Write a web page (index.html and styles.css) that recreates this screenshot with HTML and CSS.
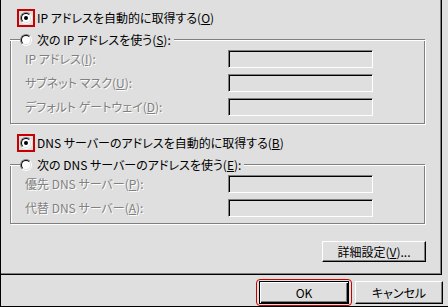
FILE: index.html
```html
<!DOCTYPE html>
<html lang="ja">
<head>
    <meta charset="UTF-8" />
    <title>インターネット プロトコル (TCP/IP) のプロパティ</title>
    <link rel="stylesheet" href="styles.css">
</head>
<body>

<div class="dialog">
    <div class="page">

        <!-- IP address -->
        <div class="option">
            <span class="mark"><span class="radio checked"></span></span>
            <span>IP アドレスを自動的に取得する(<u>O</u>)</span>
        </div>

        <div class="group">
            <div class="group-head">
                <span class="etch lead"></span>
                <span class="radio"></span>
                <span class="caption">次の IP アドレスを使う(<u>S</u>):</span>
                <span class="etch fill"></span>
            </div>
            <div class="group-body">
                <div class="field-row">
                    <span class="label">IP アドレス(<u>I</u>):</span>
                    <span class="field"></span>
                </div>
                <div class="field-row">
                    <span class="label">サブネット マスク(<u>U</u>):</span>
                    <span class="field"></span>
                </div>
                <div class="field-row">
                    <span class="label">デフォルト ゲートウェイ(<u>D</u>):</span>
                    <span class="field"></span>
                </div>
            </div>
        </div>

        <!-- DNS -->
        <div class="option spaced">
            <span class="mark"><span class="radio checked"></span></span>
            <span>DNS サーバーのアドレスを自動的に取得する(<u>B</u>)</span>
        </div>

        <div class="group">
            <div class="group-head">
                <span class="etch lead"></span>
                <span class="radio"></span>
                <span class="caption">次の DNS サーバーのアドレスを使う(<u>E</u>):</span>
                <span class="etch fill"></span>
            </div>
            <div class="group-body short">
                <div class="field-row">
                    <span class="label">優先 DNS サーバー(<u>P</u>):</span>
                    <span class="field"></span>
                </div>
                <div class="field-row">
                    <span class="label">代替 DNS サーバー(<u>A</u>):</span>
                    <span class="field"></span>
                </div>
            </div>
        </div>

        <button class="btn advanced">詳細設定(<u>V</u>)...</button>
    </div>

    <div class="footer">
        <span class="focus-ring"><button class="btn default">OK</button></span>
        <button class="btn cancel">キャンセル</button>
    </div>
</div>

</body>
</html>
```

FILE: styles.css
```css
body {
    margin: 0;
    background-color: #dfdfdf;
    font-family: "Noto Sans CJK JP", "DejaVu Sans", sans-serif;
    font-size: 12px;
    font-feature-settings: "palt";
    line-height: 12px;
    color: #000;
}
u {
    text-underline-offset: 1px;
}
.dialog {
    width: 448px;
    height: 307px;
    box-sizing: border-box;
    border-left: 1px solid #000;
    border-bottom: 1px solid #000;
    display: flex;
    flex-direction: column;
}
.page {
    width: 441px;
    height: 275px;
    box-sizing: border-box;
    padding: 9px 16px 0 9px;
    border-right: 1px solid #000;
    border-bottom: 1px solid #000;
    box-shadow: inset -1px -1px 0 #808080;
    display: flex;
    flex-direction: column;
}
.option {
    display: flex;
    align-items: center;
    gap: 2px;
    margin-left: 7px;
    white-space: nowrap;
}
.option.spaced {
    margin-top: 10px;
}
.mark {
    width: 18px;
    height: 18px;
    box-sizing: border-box;
    border: 2px solid #c80000;
    display: flex;
    align-items: center;
    justify-content: center;
}
.radio {
    position: relative;
    flex: 0 0 12px;
    width: 12px;
    height: 12px;
    box-sizing: border-box;
    border: 1px solid;
    border-color: #808080 #fff #fff #808080;
    border-radius: 50%;
    display: flex;
}
.radio::before {
    content: '';
    flex: 1;
    border: 1px solid;
    border-color: #000 #dfdfdf #dfdfdf #000;
    border-radius: 50%;
    background-color: #fff;
}
.radio.checked::after {
    content: '';
    position: absolute;
    left: 3px;
    top: 3px;
    width: 4px;
    height: 4px;
    border-radius: 50%;
    background-color: #000;
}

/* group box with a radio as caption */
.group {
    margin-top: 7px;
}
.group-head {
    display: flex;
    align-items: center;
    height: 12px;
    white-space: nowrap;
}
.etch {
    height: 2px;
    box-sizing: border-box;
    border-top: 1px solid #808080;
    border-bottom: 1px solid #fff;
}
.etch.lead {
    width: 10px;
}
.etch.fill {
    flex: 1;
    margin-left: 3px;
}
.caption {
    margin-left: 5px;
}
.group-body {
    margin-top: -7px;
    width: 415px;
    box-sizing: border-box;
    padding: 11px 0 7px 14px;
    border: 1px solid #808080;
    border-top: 0;
    box-shadow: inset 1px 0 0 #fff, 1px 1px 0 #fff;
    display: flex;
    flex-direction: column;
    gap: 6px;
}
.group-body.short {
    padding-bottom: 6px;
}
.field-row {
    display: flex;
    align-items: center;
    height: 18px;
}
.label {
    flex: 0 0 203px;
    color: #808080;
    text-shadow: 1px 1px 0 #fff;
    white-space: nowrap;
}
.field {
    width: 145px;
    height: 18px;
    box-sizing: border-box;
    border: 1px solid;
    border-color: #808080 #fff #fff #808080;
    box-shadow: inset 1px 1px 0 #000;
}

/* push buttons */
.btn {
    font-family: inherit;
    font-size: 12px;
    font-feature-settings: "palt";
    line-height: 12px;
    color: #000;
    background-color: #dfdfdf;
    padding: 0;
    margin: 0;
    height: 23px;
    box-sizing: border-box;
    border: 1px solid;
    border-color: #fff #000 #000 #fff;
    box-shadow: inset -1px -1px 0 #808080;
    border-radius: 0;
}
.btn.advanced {
    align-self: flex-end;
    width: 104px;
    height: 21px;
    margin-top: 17px;
    margin-right: -1px;
}
.btn.default {
    width: 90px;
    border-color: #000;
    box-shadow: inset 1px 1px 0 #fff, inset -1px -1px 0 #000, inset -2px -2px 0 #808080;
}
.btn.cancel {
    width: 88px;
    margin-top: 2px;
}
.footer {
    flex: 1;
    display: flex;
    justify-content: flex-end;
    align-items: flex-start;
    gap: 3px;
    padding: 4px 5px 0 0;
}
.focus-ring {
    display: flex;
    padding: 1px 2px;
    border: 1px solid #c80000;
    border-radius: 4px;
}
```
